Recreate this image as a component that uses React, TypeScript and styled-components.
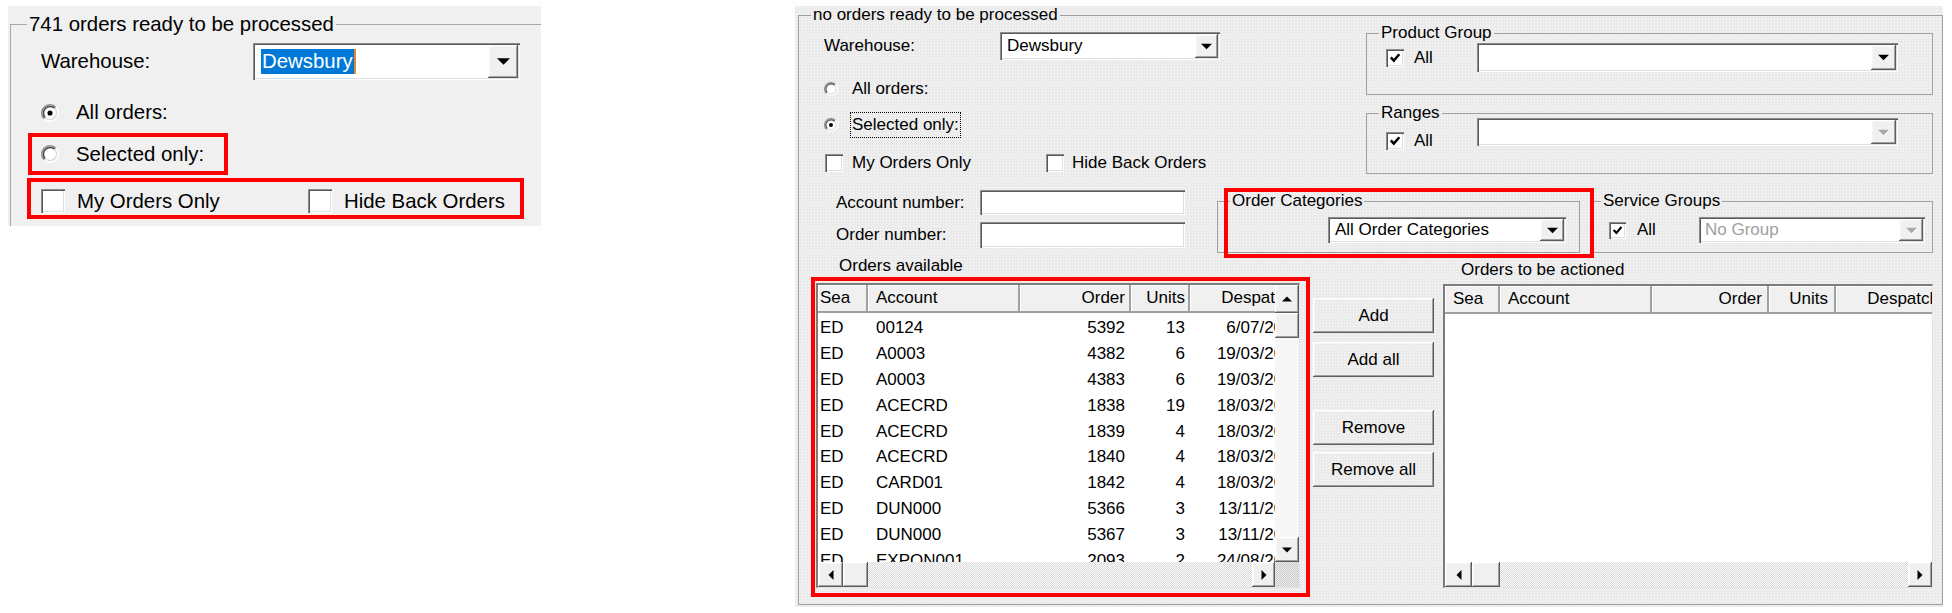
import React from "react";
import styled, { createGlobalStyle, css } from "styled-components";

const GlobalStyle = createGlobalStyle`
  html, body {
    margin: 0;
    padding: 0;
    background: #ffffff;
  }
  body {
    font-family: "Liberation Sans", Arial, sans-serif;
    color: #000;
  }
  * {
    box-sizing: border-box;
  }
`;

const dotted = css`
  background-color: #ebebeb;
  background-image: radial-gradient(circle, #fbfbfb 0.6px, transparent 0.9px);
  background-size: 3px 3px;
`;

const raised = css`
  box-shadow: inset -1px -1px #5e5e5e, inset 1px 1px #ffffff,
    inset -2px -2px #a0a0a0, inset 2px 2px #f6f6f6;
`;

const sunken = css`
  background: #ffffff;
  box-shadow: inset 1px 1px #8c8c8c, inset 2px 2px #5a5a5a,
    inset -1px -1px #ffffff, inset -2px -2px #dedede;
`;

const checker = css`
  background: repeating-conic-gradient(#d8d8d8 0 25%, #ffffff 0 50%) 0 0 / 2px 2px;
`;

const Page = styled.div`
  display: flex;
  align-items: flex-start;
  gap: 254px;
  padding: 6px 0 0 8px;
`;

/* ---------- shared controls ---------- */

const Group = styled.fieldset<{ $w?: number; $h: number; $ml?: number; $mt?: number }>`
  margin: ${(p) => p.$mt ?? 0}px 0 0 ${(p) => p.$ml ?? 0}px;
  padding: 0;
  min-inline-size: 0;
  width: ${(p) => (p.$w ? `${p.$w}px` : "auto")};
  height: ${(p) => p.$h}px;
  border: 1px solid #a0a0a0;
  flex-shrink: 0;
`;

const Legend = styled.legend<{ $indent: number }>`
  margin-left: ${(p) => p.$indent}px;
  padding: 0 2px;
  white-space: nowrap;
`;

const FieldRow = styled.div<{ $top: number; $left: number; $h: number }>`
  display: flex;
  align-items: center;
  margin-top: ${(p) => p.$top}px;
  padding-left: ${(p) => p.$left}px;
  height: ${(p) => p.$h}px;
  white-space: nowrap;
`;

const FieldLabel = styled.span<{ $w: number }>`
  width: ${(p) => p.$w}px;
  flex-shrink: 0;
`;

const OptionText = styled.span<{ $gap: number }>`
  margin-left: ${(p) => p.$gap}px;
  white-space: nowrap;
`;

const FocusText = styled.span`
  margin-left: 12px;
  height: 26px;
  line-height: 24px;
  padding: 0 1px;
  border: 1px dotted #000;
`;

const CheckItem = styled.div<{ $w: number; $top?: number }>`
  display: flex;
  align-items: center;
  width: ${(p) => p.$w}px;
  flex-shrink: 0;
  margin-top: ${(p) => p.$top ?? 0}px;
`;

const CheckBox = styled.span<{ $size: number }>`
  display: inline-flex;
  align-items: center;
  justify-content: center;
  width: ${(p) => p.$size}px;
  height: ${(p) => p.$size}px;
  flex-shrink: 0;
  ${sunken};
`;

const Check = ({ size, checked }: { size: number; checked?: boolean }) => (
  <CheckBox $size={size}>
    {checked && (
      <svg width={size - 6} height={size - 6} viewBox="0 0 10 10">
        <polyline points="1.5,4.5 4,7.2 8.6,1.8" fill="none" stroke="#000" strokeWidth="2" />
      </svg>
    )}
  </CheckBox>
);

const Radio = ({ size, checked }: { size: number; checked?: boolean }) => (
  <svg width={size} height={size} viewBox="0 0 12 12" style={{ flexShrink: 0 }}>
    <circle cx="6" cy="6" r="5.5" fill="#fff" />
    <path d="M2.11 9.89 A5.5 5.5 0 0 1 9.89 2.11" fill="none" stroke="#8c8c8c" strokeWidth="1" />
    <path d="M2.82 9.18 A4.5 4.5 0 0 1 9.18 2.82" fill="none" stroke="#4a4a4a" strokeWidth="1" />
    <path d="M2.11 9.89 A5.5 5.5 0 0 0 9.89 2.11" fill="none" stroke="#ffffff" strokeWidth="1" />
    <path d="M2.82 9.18 A4.5 4.5 0 0 0 9.18 2.82" fill="none" stroke="#dcdcdc" strokeWidth="1" />
    {checked && <circle cx="6" cy="6" r="1.7" fill="#000" />}
  </svg>
);

type Dir = "up" | "down" | "left" | "right";

const arrowPoints: Record<Dir, string> = {
  up: "0,6 8,6 4,2",
  down: "0,2 8,2 4,6",
  left: "6,0 6,8 2,4",
  right: "2,0 2,8 6,4",
};

const Arrow = ({ dir, size, disabled }: { dir: Dir; size: number; disabled?: boolean }) => (
  <svg width={size} height={size} viewBox="0 0 8 8">
    {disabled && <polygon points={arrowPoints[dir]} fill="#fff" transform="translate(0.6 0.6)" />}
    <polygon points={arrowPoints[dir]} fill={disabled ? "#a8a8a8" : "#000"} />
  </svg>
);

const ComboBox = styled.div<{ $w: number; $h: number }>`
  display: flex;
  align-items: stretch;
  width: ${(p) => p.$w}px;
  height: ${(p) => p.$h}px;
  padding: 2px;
  flex-shrink: 0;
  ${sunken};
`;

const ComboText = styled.div<{ $pad: number; $disabled?: boolean }>`
  flex: 1;
  display: flex;
  align-items: center;
  padding-left: ${(p) => p.$pad}px;
  color: ${(p) => (p.$disabled ? "#a0a0a0" : "#000")};
  white-space: nowrap;
  overflow: hidden;
`;

const Selection = styled.span`
  display: inline-block;
  line-height: 25px;
  padding: 0 1px;
  background: #0078d7;
  color: #fff;
  border-right: 2px solid #e8842c;
`;

const ComboButton = styled.div<{ $w: number }>`
  width: ${(p) => p.$w}px;
  display: flex;
  align-items: center;
  justify-content: center;
  background: #f0f0f0;
  ${raised};
`;

type ComboProps = {
  w: number;
  h: number;
  btn: number;
  arrow: number;
  pad: number;
  value?: string;
  selected?: boolean;
  disabled?: boolean;
};

const Combo = ({ w, h, btn, arrow, pad, value, selected, disabled }: ComboProps) => (
  <ComboBox $w={w} $h={h}>
    <ComboText $pad={pad} $disabled={disabled}>
      {selected ? <Selection>{value}</Selection> : value}
    </ComboText>
    <ComboButton $w={btn}>
      <Arrow dir="down" size={arrow} disabled={disabled} />
    </ComboButton>
  </ComboBox>
);

const TextInput = styled.div<{ $w: number; $h: number }>`
  width: ${(p) => p.$w}px;
  height: ${(p) => p.$h}px;
  ${sunken};
`;

const RedFrame = styled.div<{ $top: number; $left: number; $w: number; $h: number; $pl: number; $pt?: number }>`
  display: flex;
  align-items: center;
  margin: ${(p) => p.$top}px 0 0 ${(p) => p.$left}px;
  width: ${(p) => p.$w}px;
  height: ${(p) => p.$h}px;
  padding: ${(p) => p.$pt ?? 0}px 0 0 ${(p) => p.$pl}px;
  border: 4px solid #ff0000;
  white-space: nowrap;
`;

/* ---------- left (small) panel ---------- */

const LeftPanel = styled.section`
  width: 533px;
  height: 220px;
  background: #f0f0f0;
  overflow: hidden;
  font-size: 20.4px;
  line-height: 23px;
`;

const LeftGroup = styled.fieldset`
  margin: 7px 0 0 2px;
  padding: 0;
  min-inline-size: 0;
  height: 280px;
  border: 0;
  border-top: 1px solid #a8a8a8;
  border-left: 1px solid #a8a8a8;
`;

/* ---------- right (full) panel ---------- */

const RightPanel = styled.section`
  width: 1148px;
  height: 601px;
  ${dotted};
  font-size: 17px;
  line-height: 18px;
`;

const Body = styled.div`
  display: flex;
  flex-direction: column;
`;

const Section = styled.div`
  display: flex;
  align-items: flex-start;
`;

const Column = styled.div<{ $w: number; $ml?: number }>`
  display: flex;
  flex-direction: column;
  width: ${(p) => p.$w}px;
  margin-left: ${(p) => p.$ml ?? 0}px;
  flex-shrink: 0;
`;

const GroupRow = styled.div<{ $top: number; $left: number; $h: number; $align?: string }>`
  display: flex;
  align-items: ${(p) => p.$align ?? "center"};
  margin-top: ${(p) => p.$top}px;
  padding-left: ${(p) => p.$left}px;
  height: ${(p) => p.$h}px;
`;

const Shifted = styled.div<{ $top: number }>`
  margin-top: ${(p) => p.$top}px;
`;

const Highlighted = styled.div<{ $ml: number; $mt: number }>`
  position: relative;
  margin: ${(p) => p.$mt}px 0 0 ${(p) => p.$ml}px;

  &::after {
    content: "";
    position: absolute;
    left: 7px;
    top: -4px;
    width: 362px;
    height: 62px;
    border: 4px solid #ff0000;
    pointer-events: none;
  }
`;

const Caption = styled.div<{ $top: number; $left: number }>`
  margin-top: ${(p) => p.$top}px;
  padding-left: ${(p) => p.$left}px;
  height: 18px;
  white-space: nowrap;
`;

const ListFrame = styled.div`
  margin-top: 2px;
  padding: 2px 6px 5px 1px;
  border: 4px solid #ff0000;
`;

const ListSpacer = styled.div`
  margin-top: 5px;
`;

const ButtonColumn = styled.div`
  display: flex;
  flex-direction: column;
  margin-left: 3px;
  width: 121px;
  flex-shrink: 0;
`;

const PushButton = styled.button<{ $top: number }>`
  margin-top: ${(p) => p.$top}px;
  width: 121px;
  height: 35px;
  padding: 0;
  border: 0;
  font: inherit;
  color: #000;
  ${dotted};
  ${raised};
`;

/* ---------- list view ---------- */

type Col = { title: string; width: number; align: "left" | "right"; pad: number; dataWidth?: number };

const ListBox = styled.div<{ $h: number; $v: boolean }>`
  height: ${(p) => p.$h}px;
  display: grid;
  grid-template-columns: ${(p) => (p.$v ? "minmax(0, 1fr) 24px" : "minmax(0, 1fr)")};
  grid-template-rows: minmax(0, 1fr) 25px;
  background: #ffffff;
  border-top: 2px solid #7c7c7c;
  border-left: 2px solid #7c7c7c;
  border-right: 1px solid #e4e4e4;
  border-bottom: 1px solid #e4e4e4;
`;

const ListMain = styled.div`
  overflow: hidden;
  min-width: 0;
`;

const HeaderRow = styled.div`
  display: flex;
  height: 28px;
`;

const HeaderCell = styled.div<{ $w: number; $align: string; $pad: number }>`
  flex: 0 0 auto;
  width: ${(p) => p.$w}px;
  height: 28px;
  line-height: 26px;
  padding: 0 ${(p) => p.$pad}px;
  text-align: ${(p) => p.$align};
  white-space: nowrap;
  overflow: hidden;
  background: #f0f0f0;
  border-right: 2px solid #a0a0a0;
  border-bottom: 2px solid #a0a0a0;
  box-shadow: inset 1px 1px #ffffff;
`;

const RowArea = styled.div`
  padding-top: 2px;
`;

const DataRow = styled.div`
  display: flex;
  height: 25.9px;
  line-height: 25.9px;
`;

const DataCell = styled.div<{ $w: number; $align: string; $pad: number }>`
  flex: 0 0 auto;
  width: ${(p) => p.$w}px;
  padding: 0 ${(p) => p.$pad}px;
  border-right: 2px solid transparent;
  text-align: ${(p) => p.$align};
  white-space: nowrap;
  overflow: hidden;
`;

const VScroll = styled.div`
  display: flex;
  flex-direction: column;
`;

const HScroll = styled.div`
  display: flex;
`;

const ScrollButton = styled.div<{ $w?: number; $h?: number }>`
  width: ${(p) => (p.$w ? `${p.$w}px` : "auto")};
  height: ${(p) => (p.$h ? `${p.$h}px` : "auto")};
  flex-shrink: 0;
  display: flex;
  align-items: center;
  justify-content: center;
  background: #f0f0f0;
  ${raised};
`;

const VTrack = styled.div`
  flex: 1;
  background: #f7f7f7;
`;

const HTrack = styled.div`
  flex: 1;
  ${checker};
`;

const Corner = styled.div`
  background: repeating-conic-gradient(#c8c8c8 0 25%, #eeeeee 0 50%) 0 0 / 2px 2px;
`;

type ListProps = {
  cols: Col[];
  rows: string[][];
  h: number;
  vscroll: boolean;
  leftBtn: number;
  thumb: number;
  rightBtn: number;
};

const OrdersList = ({ cols, rows, h, vscroll, leftBtn, thumb, rightBtn }: ListProps) => (
  <ListBox $h={h} $v={vscroll}>
    <ListMain>
      <HeaderRow>
        {cols.map((c) => (
          <HeaderCell key={c.title} $w={c.width} $align={c.align} $pad={c.pad}>
            {c.title}
          </HeaderCell>
        ))}
      </HeaderRow>
      <RowArea>
        {rows.map((r, i) => (
          <DataRow key={i}>
            {r.map((v, j) => (
              <DataCell
                key={j}
                $w={cols[j].dataWidth ?? cols[j].width}
                $align={cols[j].align}
                $pad={cols[j].pad}
              >
                {v}
              </DataCell>
            ))}
          </DataRow>
        ))}
      </RowArea>
    </ListMain>
    {vscroll && (
      <VScroll>
        <ScrollButton $h={28}>
          <Arrow dir="up" size={10} />
        </ScrollButton>
        <ScrollButton $h={25} />
        <VTrack />
        <ScrollButton $h={25}>
          <Arrow dir="down" size={10} />
        </ScrollButton>
      </VScroll>
    )}
    <HScroll>
      <ScrollButton $w={leftBtn}>
        <Arrow dir="left" size={10} />
      </ScrollButton>
      <ScrollButton $w={thumb} />
      <HTrack />
      <ScrollButton $w={rightBtn}>
        <Arrow dir="right" size={10} />
      </ScrollButton>
    </HScroll>
    {vscroll && <Corner />}
  </ListBox>
);

const availableCols: Col[] = [
  { title: "Sea", width: 50, align: "left", pad: 2 },
  { title: "Account", width: 152, align: "left", pad: 8 },
  { title: "Order", width: 111, align: "right", pad: 4 },
  { title: "Units", width: 59, align: "right", pad: 3 },
  { title: "Despatch", width: 108, align: "right", pad: 3, dataWidth: 117 },
];

const actionedCols: Col[] = [
  { title: "Sea", width: 55, align: "left", pad: 8 },
  { title: "Account", width: 152, align: "left", pad: 8 },
  { title: "Order", width: 117, align: "right", pad: 5 },
  { title: "Units", width: 67, align: "right", pad: 6 },
  { title: "Despatch", width: 108, align: "right", pad: 3 },
];

const availableRows: string[][] = [
  ["ED", "00124", "5392", "13", "6/07/2021"],
  ["ED", "A0003", "4382", "6", "19/03/2021"],
  ["ED", "A0003", "4383", "6", "19/03/2021"],
  ["ED", "ACECRD", "1838", "19", "18/03/2021"],
  ["ED", "ACECRD", "1839", "4", "18/03/2021"],
  ["ED", "ACECRD", "1840", "4", "18/03/2021"],
  ["ED", "CARD01", "1842", "4", "18/03/2021"],
  ["ED", "DUN000", "5366", "3", "13/11/2020"],
  ["ED", "DUN000", "5367", "3", "13/11/2020"],
  ["ED", "EXPON001", "2093", "2", "24/08/2020"],
];

const App = () => (
  <>
    <GlobalStyle />
    <Page>
      <LeftPanel>
        <LeftGroup>
          <Legend $indent={16}>741 orders ready to be processed</Legend>
          <FieldRow $top={7} $left={30} $h={37}>
            <FieldLabel $w={212}>Warehouse:</FieldLabel>
            <Combo w={267} h={37} btn={30} arrow={13} pad={6} value="Dewsbury" selected />
          </FieldRow>
          <FieldRow $top={21} $left={30} $h={23}>
            <Radio size={18} checked />
            <OptionText $gap={17}>All orders:</OptionText>
          </FieldRow>
          <RedFrame $top={9} $left={17} $w={200} $h={42} $pl={9}>
            <Radio size={18} />
            <OptionText $gap={17}>Selected only:</OptionText>
          </RedFrame>
          <RedFrame $top={3} $left={16} $w={497} $h={41} $pl={10} $pt={5}>
            <CheckItem $w={267}>
              <Check size={24} />
              <OptionText $gap={12}>My Orders Only</OptionText>
            </CheckItem>
            <Check size={24} />
            <OptionText $gap={12}>Hide Back Orders</OptionText>
          </RedFrame>
        </LeftGroup>
      </LeftPanel>

      <RightPanel>
        <Group $ml={3} $w={1145} $h={599}>
          <Legend $indent={12}>no orders ready to be processed</Legend>
          <Body>
            <Section>
              <Column $w={567}>
                <FieldRow $top={8} $left={25} $h={28}>
                  <FieldLabel $w={176}>Warehouse:</FieldLabel>
                  <Combo w={220} h={28} btn={23} arrow={11} pad={5} value="Dewsbury" />
                </FieldRow>
                <FieldRow $top={20} $left={25} $h={18}>
                  <Radio size={14} />
                  <OptionText $gap={14}>All orders:</OptionText>
                </FieldRow>
                <FieldRow $top={14} $left={25} $h={26}>
                  <Radio size={14} checked />
                  <FocusText>Selected only:</FocusText>
                </FieldRow>
                <FieldRow $top={16} $left={26} $h={18}>
                  <CheckItem $w={221}>
                    <Check size={18} />
                    <OptionText $gap={9}>My Orders Only</OptionText>
                  </CheckItem>
                  <Check size={18} />
                  <OptionText $gap={8}>Hide Back Orders</OptionText>
                </FieldRow>
              </Column>
              <Column $w={567}>
                <Group $w={567} $h={71}>
                  <Legend $indent={12}>Product Group</Legend>
                  <GroupRow $top={1} $left={19} $h={29}>
                    <CheckItem $w={91}>
                      <Check size={18} checked />
                      <OptionText $gap={10}>All</OptionText>
                    </CheckItem>
                    <Combo w={421} h={29} btn={25} arrow={11} pad={5} />
                  </GroupRow>
                </Group>
                <Group $w={567} $h={70} $mt={9}>
                  <Legend $indent={12}>Ranges</Legend>
                  <GroupRow $top={0} $left={19} $h={28} $align="flex-start">
                    <CheckItem $w={91} $top={10}>
                      <Check size={18} checked />
                      <OptionText $gap={10}>All</OptionText>
                    </CheckItem>
                    <Shifted $top={-4}>
                      <Combo w={421} h={28} btn={25} arrow={11} pad={5} disabled />
                    </Shifted>
                  </GroupRow>
                </Group>
              </Column>
            </Section>

            <Section>
              <Column $w={386}>
                <FieldRow $top={16} $left={37} $h={25}>
                  <FieldLabel $w={144}>Account number:</FieldLabel>
                  <TextInput $w={205} $h={25} />
                </FieldRow>
                <FieldRow $top={7} $left={37} $h={26}>
                  <FieldLabel $w={144}>Order number:</FieldLabel>
                  <TextInput $w={205} $h={26} />
                </FieldRow>
              </Column>
              <Highlighted $ml={32} $mt={18}>
                <Group $w={363} $h={61}>
                  <Legend $indent={12}>Order Categories</Legend>
                  <GroupRow $top={7} $left={110} $h={26}>
                    <Combo w={238} h={26} btn={24} arrow={11} pad={5} value="All Order Categories" />
                  </GroupRow>
                </Group>
              </Highlighted>
              <Group $w={343} $h={61} $ml={10} $mt={18}>
                <Legend $indent={10}>Service Groups</Legend>
                <GroupRow $top={7} $left={18} $h={26}>
                  <CheckItem $w={90}>
                    <Check size={17} checked />
                    <OptionText $gap={11}>All</OptionText>
                  </CheckItem>
                  <Combo w={226} h={26} btn={24} arrow={11} pad={4} value="No Group" disabled />
                </GroupRow>
              </Group>
            </Section>

            <Section>
              <Column $w={499} $ml={12}>
                <Caption $top={4} $left={28}>
                  Orders available
                </Caption>
                <ListFrame>
                  <OrdersList
                    cols={availableCols}
                    rows={availableRows}
                    h={305}
                    vscroll
                    leftBtn={25}
                    thumb={25}
                    rightBtn={23}
                  />
                </ListFrame>
              </Column>
              <ButtonColumn>
                <PushButton $top={45}>Add</PushButton>
                <PushButton $top={9}>Add all</PushButton>
                <PushButton $top={33}>Remove</PushButton>
                <PushButton $top={7}>Remove all</PushButton>
              </ButtonColumn>
              <Column $w={490} $ml={9}>
                <Caption $top={8} $left={18}>
                  Orders to be actioned
                </Caption>
                <ListSpacer>
                  <OrdersList
                    cols={actionedCols}
                    rows={[]}
                    h={304}
                    vscroll={false}
                    leftBtn={27}
                    thumb={28}
                    rightBtn={24}
                  />
                </ListSpacer>
              </Column>
            </Section>
          </Body>
        </Group>
      </RightPanel>
    </Page>
  </>
);

export default App;
